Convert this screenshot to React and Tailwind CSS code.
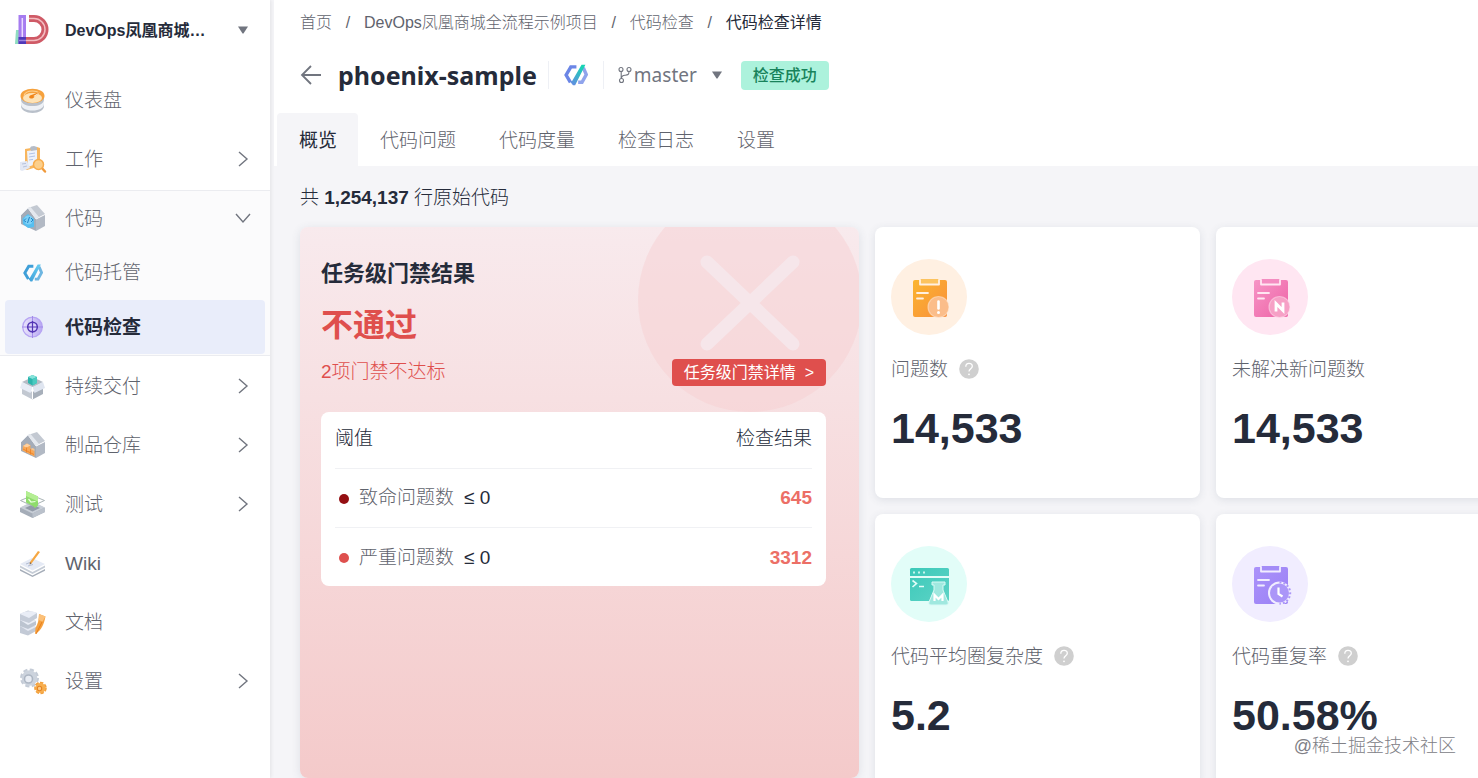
import React from "react";

const DashboardIcon = () => (
  <svg viewBox="0 0 28 28" className="size-7 shrink-0">
    <path d="M2 10v10c0 4 5 7 11.500 7S25 24 25 20V10z" fill="#b9c0ca" />
    <path d="M2 14v4c0 4 5 6.500 11.500 6.500S25 22 25 18v-4c-1 4-5 6-11.500 6S3 18 2 14z" fill="#eef1f6" />
    <ellipse cx="13.500" cy="10" rx="12" ry="7.300" fill="#f6a13c" />
    <ellipse cx="13.500" cy="12" rx="9.500" ry="5" fill="#fde3b8" />
    <path d="M5 9.500c1-3 4.500-4.500 8.500-4.500 3 0 5 .5 6.500 1.700" fill="none" stroke="#fdd08f" strokeWidth="1.200" />
    <path d="M22 5.500 11 9.500c-1.500 1-1 3 1.200 3 1.800 0 2.600-.8 3.300-1.800z" fill="#f08519" />
    <path d="M22 5.500 14.500 10l1 .8z" fill="#fff3df" />
  </svg>
);

const WorkIcon = () => (
  <svg viewBox="0 0 28 28" className="size-7 shrink-0">
    <path d="m6 4 12-2 3 1v18l-13 4-2-1z" fill="#f8b65e" />
    <path d="m8 6 10-1.500v14L9 22z" fill="#eef2fa" />
    <path d="m11 3 1-1.500 3-.5 3 1v3l-6 1z" fill="#b5bcc7" />
    <path d="m10 9 6-1M10 12l6-1M10 15l4-.6" stroke="#b3c3e6" strokeWidth="1" />
    <path d="m1 17 7-1 3 7-8 3-2-1z" fill="#e3e8f4" />
    <path d="m3 19 4-.6M4 22l4-1" stroke="#b7c3dd" strokeWidth="1" />
    <path d="m22 22 4 4.500" stroke="#f0993a" strokeWidth="2.400" strokeLinecap="round" />
    <circle cx="19.500" cy="19.500" r="5" fill="#fccf8b" stroke="#f7ab4b" strokeWidth="1.500" />
  </svg>
);

const HouseShell = ({ children }) => (
  <svg viewBox="0 0 28 28" className="size-7 shrink-0">
    <path d="M2 11 9 4l8 11v12L2 20z" fill="#a4acb8" />
    <path d="m9 4 9-3 8 9-9 4.500z" fill="#c3c9d2" />
    <path d="m9 4 2.500-1 8.500 10-3 1.500z" fill="#e4e8ee" />
    <path d="m17 15.500 9-4.500v11l-9 5z" fill="#b2b9c4" />
    <path d="M2 11 9 4l8 11" fill="none" stroke="#e8ebf0" strokeWidth="1" />
    {children}
  </svg>
);

const CodeIcon = () => (
  <HouseShell>
    <path d="M3.500 14.500 9 10l6 5v8L9 24l-5-4z" fill="#56bff0" />
    <circle cx="9.500" cy="16" r="4.500" fill="#7ed1f7" />
    <path d="m7 14.500-2 2 2 1.500m5-4 2 2-2 2M10.500 13l-2 6" fill="none" stroke="#2384c6" strokeWidth="1" />
  </HouseShell>
);

const ArtifactIcon = () => (
  <HouseShell>
    <path d="m4 15 4-2.500 3.500 2V18l4 2v5.500l-12-6z" fill="#f8a857" />
    <path d="m4 15 4-2.500 3.500 2-4 2z" fill="#fdd1a1" />
    <path d="M7.500 16.500v5M11.500 18v5.500M4 18l11 5.500" stroke="#ea7f25" strokeWidth=".8" />
    <path d="m11.500 18 2-1 2 1v2z" fill="#fbc48a" />
  </HouseShell>
);

const RepoLogo = ({ id, from, to, className }) => (
  <svg viewBox="0 0 28 28" className={className}>
    <defs>
      <linearGradient id={id} x1="0" y1="1" x2=".6" y2="0">
        <stop offset="0" stopColor={from} />
        <stop offset="1" stopColor={to} />
      </linearGradient>
    </defs>
    <path d="M14.500 4.500H8L2.500 14l5 8.500" fill="none" stroke={from} strokeWidth="4" />
    <path d="m22.500 5.500 3.500 8-5 9h-4.500" fill="none" stroke={from} strokeWidth="4" opacity=".75" />
    <path d="m7 21.500 3.500 4.500h2.500L25 2h-4.500L9.500 21z" fill={`url(#${id})`} />
  </svg>
);

const HostingIcon = () => (
  <span className="flex size-7 shrink-0 items-center justify-center">
    <RepoLogo id="hosting" from="#3f9fd8" to="#62c8ef" className="size-5" />
  </span>
);

const InspectIcon = () => (
  <svg viewBox="0 0 28 28" className="size-7 shrink-0">
    <defs>
      <linearGradient id="inspect" x1="0" x2="1">
        <stop offset="0" stopColor="#eae6fc" />
        <stop offset="1" stopColor="#b8a8f2" />
      </linearGradient>
    </defs>
    <circle cx="13.500" cy="14" r="9.800" fill="url(#inspect)" stroke="#b6a4f3" strokeWidth="1.300" />
    <path d="M13.500 3v22M3 14h21" stroke="#a18ae9" strokeWidth="1" />
    <circle cx="13.500" cy="14" r="4.800" fill="#d9d1fa" stroke="#5335b5" strokeWidth="1.500" />
    <path d="M13.500 8v12M8 14h11" stroke="#5335b5" strokeWidth="1.200" />
  </svg>
);

const DeliveryIcon = () => (
  <svg viewBox="0 0 28 28" className="size-7 shrink-0">
    <path d="m3 10 10.500-5L24 10l-10.500 6z" fill="#b5bcc6" />
    <path d="m9 5 4.500-2L18 5v6l-4.500 2.500L9 11z" fill="#2cb5ad" />
    <path d="m9 5 4.500-2L18 5l-4.500 2z" fill="#86e3da" />
    <path d="m13.500 7 4.500-2v6l-4.500 2.500z" fill="#4bcac0" />
    <path d="m3 15 10.500 5v7.500L3 22z" fill="#c2c8d1" />
    <path d="m24 15-10.500 5v7.500L24 22z" fill="#a7afba" />
    <path d="m3 10 10.500 5-2 6L1 16z" fill="#e7ecf6" />
    <path d="m24 10-10.500 5 2 6L26 16z" fill="#dfe5f0" />
    <path d="M13.500 15v12" stroke="#fff" strokeWidth="1" />
  </svg>
);

const TestIcon = () => (
  <svg viewBox="0 0 28 28" className="size-7 shrink-0">
    <path d="m1 18 12.500-6L26 18v4l-12.500 6L1 22z" fill="#a5adb8" />
    <path d="m1 17.500 12.500-6 12.500 6-12.500 6z" fill="#c8ced7" />
    <path d="m6 18 7.500-3.500L21 18l-7.500 3.500z" fill="#929ba8" />
    <path d="m13.500 23.500 12.500-6V22l-12.500 6z" fill="#bac1cb" />
    <path d="m1.500 10.500 12-5 12 5-12 5.500z" fill="none" stroke="#a9b3b5" strokeWidth="1" />
    <path d="m7 1 12 5.500v9L16 18l-2-2-7-3.500z" fill="#8fdc6c" />
    <path d="m7 1 12 5.500v5L7 6z" fill="#b4ee93" />
    <path d="m9.500 9 2.500 3 4.500-.5" fill="none" stroke="#e9ffdd" strokeWidth="1.200" />
  </svg>
);

const WikiIcon = () => (
  <svg viewBox="0 0 28 28" className="size-7 shrink-0">
    <path d="m1 20 12.500 6.500L26 20v1.800L13.500 28 1 21.800z" fill="#a6aeb9" />
    <path d="m1 16.500 12.500 6.500L26 16.500v2L13.500 25 1 18.500z" fill="#c5ccd6" />
    <path d="m1 15 12-6 13 6-12.500 6.500z" fill="#e5eaf5" />
    <path d="m7 15 4-1.500M9 17l5-1.500" stroke="#b3bdd3" strokeWidth="1" />
    <path d="m19 2 2 1-8.500 11.500-1.800 1 .3-2.500z" fill="#f6a742" />
    <path d="m11 13 1.500 1.500-1.800 1z" fill="#7d6a5a" />
  </svg>
);

const DocsIcon = () => (
  <svg viewBox="0 0 28 28" className="size-7 shrink-0">
    <path d="m1 18 8-2 8 3v4l-8 4.500L1 25z" fill="#c3cad6" />
    <path d="m1 18 8-2 8 3-8 4z" fill="#e6eaf3" />
    <path d="m1 12 8-2 8 3v4l-8 4-8-3z" fill="#bcc4d0" />
    <path d="m1 12 8-2 8 3-8 4z" fill="#eaeef6" />
    <path d="m1 6 8-3.500L18 5v5l-8 5-9-3z" fill="#c5ccd8" />
    <path d="M1 6c3-3 13-4 17-1l-8 5z" fill="#e9edf6" />
    <path d="m20 6 6.500 2.500C25 16 23 22 16 26l.5-6C19 16 20 11 20 6z" fill="#f6a13e" />
    <path d="m20 6 6.500 2.500-3 5-4-1.500z" fill="#fbc079" />
    <path d="m17 26 6-12" stroke="#e67d1c" strokeWidth="1" />
  </svg>
);

const SettingsIcon = () => (
  <svg viewBox="0 0 28 28" className="size-7 shrink-0">
    <circle cx="10.500" cy="11" r="8" fill="none" stroke="#c4cbd6" strokeWidth="3" strokeDasharray="4 2.280" />
    <circle cx="10.500" cy="11" r="7.800" fill="#ccd3dd" />
    <circle cx="9.500" cy="12" r="4" fill="#e9edf4" stroke="#adb6c3" strokeWidth="1.600" />
    <circle cx="21.500" cy="21" r="5" fill="none" stroke="#f3a03c" strokeWidth="2.600" strokeDasharray="3.200 1.288" />
    <circle cx="21.500" cy="21" r="5" fill="#f7ae4e" />
    <circle cx="20.500" cy="21.500" r="2.200" fill="#fbcb88" stroke="#e58322" strokeWidth="1.100" />
  </svg>
);

const Chevron = ({ open }) => (
  <svg viewBox="0 0 16 16" className={open ? "size-4 rotate-90" : "size-4"}>
    <path d="m4 1 8 7-8 7" fill="none" stroke="#71757f" strokeWidth="1.400" />
  </svg>
);

const Caret = ({ className }) => (
  <svg viewBox="0 0 12 8" className={className}>
    <path d="M1 .5h10L6.500 7.500h-1z" fill="#71757f" />
  </svg>
);

const BrandLogo = () => (
  <svg viewBox="0 0 36 32" className="h-8 w-9 shrink-0">
    <path d="M14 4.500h5a11 11 0 0 1 0 22H7" fill="none" stroke="#cf5a66" strokeWidth="7" />
    <path d="M14 4.500h5a11 11 0 0 1 0 22H7" fill="none" stroke="#f3bcc0" strokeWidth="1.500" />
    <path d="M1 16h3v14H0z" fill="#8fdcc0" />
    <path d="M3.500 1h7.500v29H3.500z" fill="#a67cf0" />
    <path d="M3.500 23H11v7H3.500z" fill="#4f37b8" />
    <path d="M7.300 4v19" stroke="#eadcff" strokeWidth="1.500" />
    <path d="M4 26.500h7" stroke="#9c83e0" strokeWidth="1.500" />
  </svg>
);

const BranchIcon = () => (
  <svg viewBox="0 0 14 18" className="h-[18px] w-3.5" fill="none" stroke="#71757f" strokeWidth="1.100">
    <circle cx="3" cy="3.500" r="2" />
    <circle cx="11" cy="3.500" r="2" />
    <circle cx="3.500" cy="14.500" r="2" />
    <path d="M3.200 5.500v7M11 5.500c0 3.500-1.500 3.500-4 3.700-2 .2-3.500.8-3.500 3" />
  </svg>
);

const HelpIcon = () => (
  <svg viewBox="0 0 20 20" className="size-5">
    <circle cx="10" cy="10" r="9.800" fill="#cfcfcf" />
    <path d="M6.800 7.800C6.800 5.500 8 4.300 10 4.300s3.300 1.200 3.300 3c0 2.400-3.300 2.500-3.300 5.200" fill="none" stroke="#fff" strokeWidth="1.300" />
    <circle cx="10" cy="15.300" r=".9" fill="#fff" />
  </svg>
);

const Clipboard = ({ id, from, to, bg, clip, badge, children }) => (
  <svg viewBox="0 0 76 76" className="size-[76px]">
    <defs>
      <linearGradient id={id} x1="0" y1="0" x2="1" y2="1">
        <stop offset="0" stopColor={from} />
        <stop offset="1" stopColor={to} />
      </linearGradient>
    </defs>
    <circle cx="38" cy="38" r="38" fill={bg} />
    <rect x="22" y="21" width="34" height="37" rx="2" fill={`url(#${id})`} />
    <path d="M29 20.500v5h19v-5" fill={clip} stroke={bg} strokeWidth="1.800" strokeLinejoin="round" />
    <path d="M30 20h17v4H30z" fill={clip} />
    <path d="M26 34h11M26 39.500h6" stroke={bg} strokeWidth="1.800" strokeLinecap="round" />
    {badge && <circle cx="47.500" cy="48" r="10.500" fill={badge} stroke={bg} strokeOpacity=".5" strokeWidth="1.200" />}
    {children}
  </svg>
);

const IssueIcon = () => (
  <Clipboard id="issue" from="#fbb52f" to="#f98f3c" bg="#fff0e2" clip="#fcc35f" badge="#fbbd8a">
    <path d="M47.500 42.500v7" stroke="#fff" strokeWidth="2.600" strokeLinecap="round" />
    <circle cx="47.500" cy="53.500" r="1.500" fill="#fff" />
  </Clipboard>
);

const NewIssueIcon = () => (
  <Clipboard id="newIssue" from="#f695c6" to="#ee62a6" bg="#ffe6f2" clip="#f48cc1" badge="#f6a0c6">
    <path d="M44 52.500v-8l7 7v-8" fill="none" stroke="#fff" strokeWidth="2.800" />
  </Clipboard>
);

const DuplicateIcon = () => (
  <Clipboard id="duplicate" from="#ab92fa" to="#9a80f5" bg="#f1edff" clip="#a48cf7">
    <circle cx="47.500" cy="47" r="11.500" fill="#f1edff" />
    <circle cx="47.500" cy="47" r="9.500" fill="#ab96f8" />
    <path d="M47.500 36.300a10.700 10.700 0 0 1 0 21.400" fill="none" stroke="#ab96f8" strokeWidth="2" strokeDasharray="2 2" />
    <path d="M46.500 41.500V48l4 2.500" fill="none" stroke="#fff" strokeWidth="2.200" />
  </Clipboard>
);

const ComplexityIcon = () => (
  <svg viewBox="0 0 76 76" className="size-[76px]">
    <defs>
      <linearGradient id="complexity" x1="0" y1="0" x2="1" y2="1">
        <stop offset="0" stopColor="#3cc9b9" />
        <stop offset="1" stopColor="#5dd3c6" />
      </linearGradient>
    </defs>
    <circle cx="38" cy="38" r="38" fill="#e2fdf8" />
    <rect x="19" y="22" width="39" height="33" rx="1.500" fill="url(#complexity)" />
    <path d="M19 31h39" stroke="#e2fdf8" strokeWidth="2" />
    <path d="M22 26.500h2m3 0h2m3 0h2" stroke="#c7f5ee" strokeWidth="1.800" />
    <path d="m21.500 34.500 4 3-4 3.500M28 40.500h5" fill="none" stroke="#e2fdf8" strokeWidth="1.600" />
    <path d="M41 36h13v3h-2v5l5 12c.5 1.500 0 3-2 3H40c-2 0-2.500-1.500-2-3l5-12v-5h-2z" fill="#a0e8df" stroke="#d8faf5" strokeWidth="1" />
    <path d="M43.500 55v-6l4 4 4-4v6" fill="none" stroke="#fff" strokeWidth="2.200" />
  </svg>
);

const topNav = [
  { name: "仪表盘", icon: DashboardIcon },
  { name: "工作", icon: WorkIcon, more: true },
];

const bottomNav = [
  { name: "持续交付", icon: DeliveryIcon, more: true },
  { name: "制品仓库", icon: ArtifactIcon, more: true },
  { name: "测试", icon: TestIcon, more: true },
  { name: "Wiki", icon: WikiIcon },
  { name: "文档", icon: DocsIcon },
  { name: "设置", icon: SettingsIcon, more: true },
];

const crumbs = ["首页", "DevOps凤凰商城全流程示例项目", "代码检查"];

const tabs = ["概览", "代码问题", "代码度量", "检查日志", "设置"];

const thresholds = [
  { name: "致命问题数", limit: "≤ 0", value: 645, dot: "bg-[#940f12]" },
  { name: "严重问题数", limit: "≤ 0", value: 3312, dot: "bg-[#de504e]" },
];

const metrics = [
  { name: "问题数", value: "14,533", icon: IssueIcon, help: true },
  { name: "未解决新问题数", value: "14,533", icon: NewIssueIcon },
  { name: "代码平均圈复杂度", value: "5.2", icon: ComplexityIcon, help: true },
  { name: "代码重复率", value: "50.58%", icon: DuplicateIcon, help: true },
];

const NavItem = ({ item }) => {
  const Icon = item.icon;
  return (
    <a href="#" className="flex h-[59px] items-center gap-[18px] pr-[19px] pl-[19px]">
      <Icon />
      <span className="flex-1 pt-1">{item.name}</span>
      {item.more && <Chevron />}
    </a>
  );
};

const Sidebar = () => (
  <aside className="z-10 w-[270px] shrink-0 bg-white text-[19px] font-light text-[#5f636d] shadow-[1px_0_4px_rgba(0,0,0,0.08)]">
    <button className="mb-2.5 flex h-[60px] w-full items-center gap-3.5 pr-[21px] pl-[15px] text-left">
      <BrandLogo />
      <span className="flex-1 pt-0.5 text-base font-semibold text-[#252b3a]">DevOps凤凰商城…</span>
      <Caret className="h-2 w-3" />
    </button>

    <nav>
      {topNav.map((item) => (
        <NavItem key={item.name} item={item} />
      ))}

      {/* Groupe ouvert */}
      <div className="mt-0.5 border-y border-[#ebecf0] bg-[#fbfbfc]">
        <a href="#" className="flex h-[54px] items-center gap-[18px] px-[19px]">
          <CodeIcon />
          <span className="flex-1 pt-0.5">代码</span>
          <Chevron open />
        </a>
        <a href="#" className="flex h-[55px] items-center gap-[18px] px-[19px]">
          <HostingIcon />
          <span className="pt-0.5">代码托管</span>
        </a>
        <a
          href="#"
          className="mx-[5px] mb-px flex h-[54px] items-center gap-[18px] rounded bg-[#e9edfa] px-3.5 font-bold text-[#252b3a]"
        >
          <InspectIcon />
          <span className="pt-0.5">代码检查</span>
        </a>
      </div>

      {bottomNav.map((item) => (
        <NavItem key={item.name} item={item} />
      ))}
    </nav>
  </aside>
);

const Header = () => (
  <header className="bg-white">
    <nav className="flex h-11 items-center pt-0.5 pl-[26px] text-base font-light text-[#5f636d]">
      {crumbs.map((name) => (
        <React.Fragment key={name}>
          <a href="#">{name}</a>
          <span className="w-8 text-center">/</span>
        </React.Fragment>
      ))}
      <span className="font-normal text-[#252b3a]">代码检查详情</span>
    </nav>

    <div className="flex h-[62px] items-center pl-[26px]">
      <button aria-label="返回" className="mr-4">
        <svg viewBox="0 0 22 22" className="size-[22px]">
          <path d="M21 11H1.500M11 2l-9 9 9 9" fill="none" stroke="#71757f" strokeWidth="1.800" />
        </svg>
      </button>
      <h1 className="pt-0.5 font-['Noto_Sans','Noto_Sans_CJK_SC',sans-serif] text-[25px] font-bold text-[#252b3a]">
        phoenix-sample
      </h1>
      <span className="ml-[11px] h-7 w-px bg-[#eef0f5]" />
      <RepoLogo id="header" from="#6b86e6" to="#16d3b4" className="mx-[15px] size-6" />
      <span className="mr-3.5 h-7 w-px bg-[#eef0f5]" />
      <BranchIcon />
      <div className="relative mr-[18px] flex items-center">
        <select
          aria-label="分支"
          className="w-[91px] appearance-none bg-transparent pl-0.5 font-['Noto_Sans',sans-serif] text-[19px] text-[#71757f]"
        >
          <option>master</option>
        </select>
        <Caret className="pointer-events-none absolute right-0 h-2 w-3" />
      </div>
      <span className="rounded bg-[#acf2dc] px-3 text-base leading-[29px] font-medium text-[#18835b]">
        检查成功
      </span>
    </div>

    <div role="tablist" className="mt-[7px] flex pl-[3px] text-[19px] font-light text-[#5f636d]">
      {tabs.map((name, i) => (
        <button
          key={name}
          role="tab"
          aria-selected={i === 0}
          className={
            i === 0
              ? "h-[53px] rounded-t bg-[#f5f5f8] pt-1 pr-[21px] pl-[22px] font-normal text-[#252b3a]"
              : "h-[53px] pt-1 pr-[21px] pl-[22px]"
          }
        >
          {name}
        </button>
      ))}
    </div>
  </header>
);

const GateCard = () => (
  <section className="relative w-[559px] shrink-0 overflow-hidden rounded-lg bg-linear-to-b from-[#f8eaed] to-[#f4caca] px-[21px] pt-[27px] shadow-[0_2px_10px_rgba(60,70,100,0.12)]">
    <svg viewBox="0 0 224 224" className="absolute -top-[39px] -right-[3px] size-56">
      <circle cx="112" cy="112" r="112" fill="#f7cfd2" fillOpacity=".48" />
      <path d="m69 74 86 82M155 74l-86 82" stroke="#f6e6ea" strokeWidth="13" strokeLinecap="round" />
    </svg>

    <div className="relative pr-3">
      <h2 className="text-[22px] leading-10 font-bold text-[#252b3a]">任务级门禁结果</h2>
      <p className="text-[32px] leading-[62px] font-bold text-[#df4f4d]">不通过</p>
      <div className="flex h-8 items-center justify-between">
        <span className="text-[19px] font-light text-[#df4f4d]">2项门禁不达标</span>
        <button className="rounded bg-[#df4f4d] px-3 text-base leading-[27px] text-white">
          任务级门禁详情&nbsp; &gt;
        </button>
      </div>

      <div className="mt-6 rounded-lg bg-white px-3.5">
        <table className="w-full text-[19px] text-[#252b3a]">
          <thead>
            <tr className="h-14 border-b border-[#f0f1f4]">
              <th className="pb-0.5 text-left font-light">阈值</th>
              <th className="pb-0.5 text-right font-light">检查结果</th>
            </tr>
          </thead>
          <tbody>
            {thresholds.map((row) => (
              <tr key={row.name} className="h-[59px] border-b border-[#f0f1f4] last:border-0">
                <td className="pt-0.5">
                  <span className="flex items-center pl-1">
                    <span className={`mr-2.5 size-2.5 rounded-full ${row.dot}`} />
                    <span className="mr-2.5 font-light text-[#5f636d]">{row.name}</span>
                    {row.limit}
                  </span>
                </td>
                <td className="pt-0.5 text-right font-bold text-[#ec6f66]">{row.value}</td>
              </tr>
            ))}
          </tbody>
        </table>
      </div>
    </div>
  </section>
);

const MetricCard = ({ item }) => {
  const Icon = item.icon;
  return (
    <section className="rounded-lg bg-white px-4 pt-8 shadow-[0_2px_8px_rgba(60,70,100,0.12)]">
      <Icon />
      <div className="mt-5 flex h-7 items-center gap-[11px] text-[19px] font-light text-[#5f636d]">
        <h3 className="pt-0.5">{item.name}</h3>
        {item.help && (
          <button aria-label="帮助">
            <HelpIcon />
          </button>
        )}
      </div>
      <p className="mt-[15px] text-[43px] leading-[60px] font-bold text-[#252b3a]">{item.value}</p>
    </section>
  );
};

const App = () => {
  return (
    <div className="relative flex h-screen overflow-hidden bg-[#f5f5f8] font-['Liberation_Sans','Noto_Sans_CJK_SC',sans-serif]">
      <Sidebar />

      <main className="ml-1 min-w-0 flex-1">
        <Header />

        <div className="pl-[26px]">
          <p className="h-[61px] pt-4 text-[19px] leading-8 font-light text-[#252b3a]">
            共 <b className="font-bold">1,254,137</b> 行原始代码
          </p>
          <div className="flex h-[551px] gap-4">
            <GateCard />
            <div className="grid min-w-[666px] flex-1 auto-rows-[271px] grid-cols-2 gap-4">
              {metrics.map((item) => (
                <MetricCard key={item.name} item={item} />
              ))}
            </div>
          </div>
        </div>
      </main>

      {/* Filigrane */}
      <span className="absolute right-[22px] bottom-[18px] text-lg leading-7 font-light text-[#808086] [text-shadow:1px_1px_1px_#fff]">
        @稀土掘金技术社区
      </span>
    </div>
  );
};

export default App;
